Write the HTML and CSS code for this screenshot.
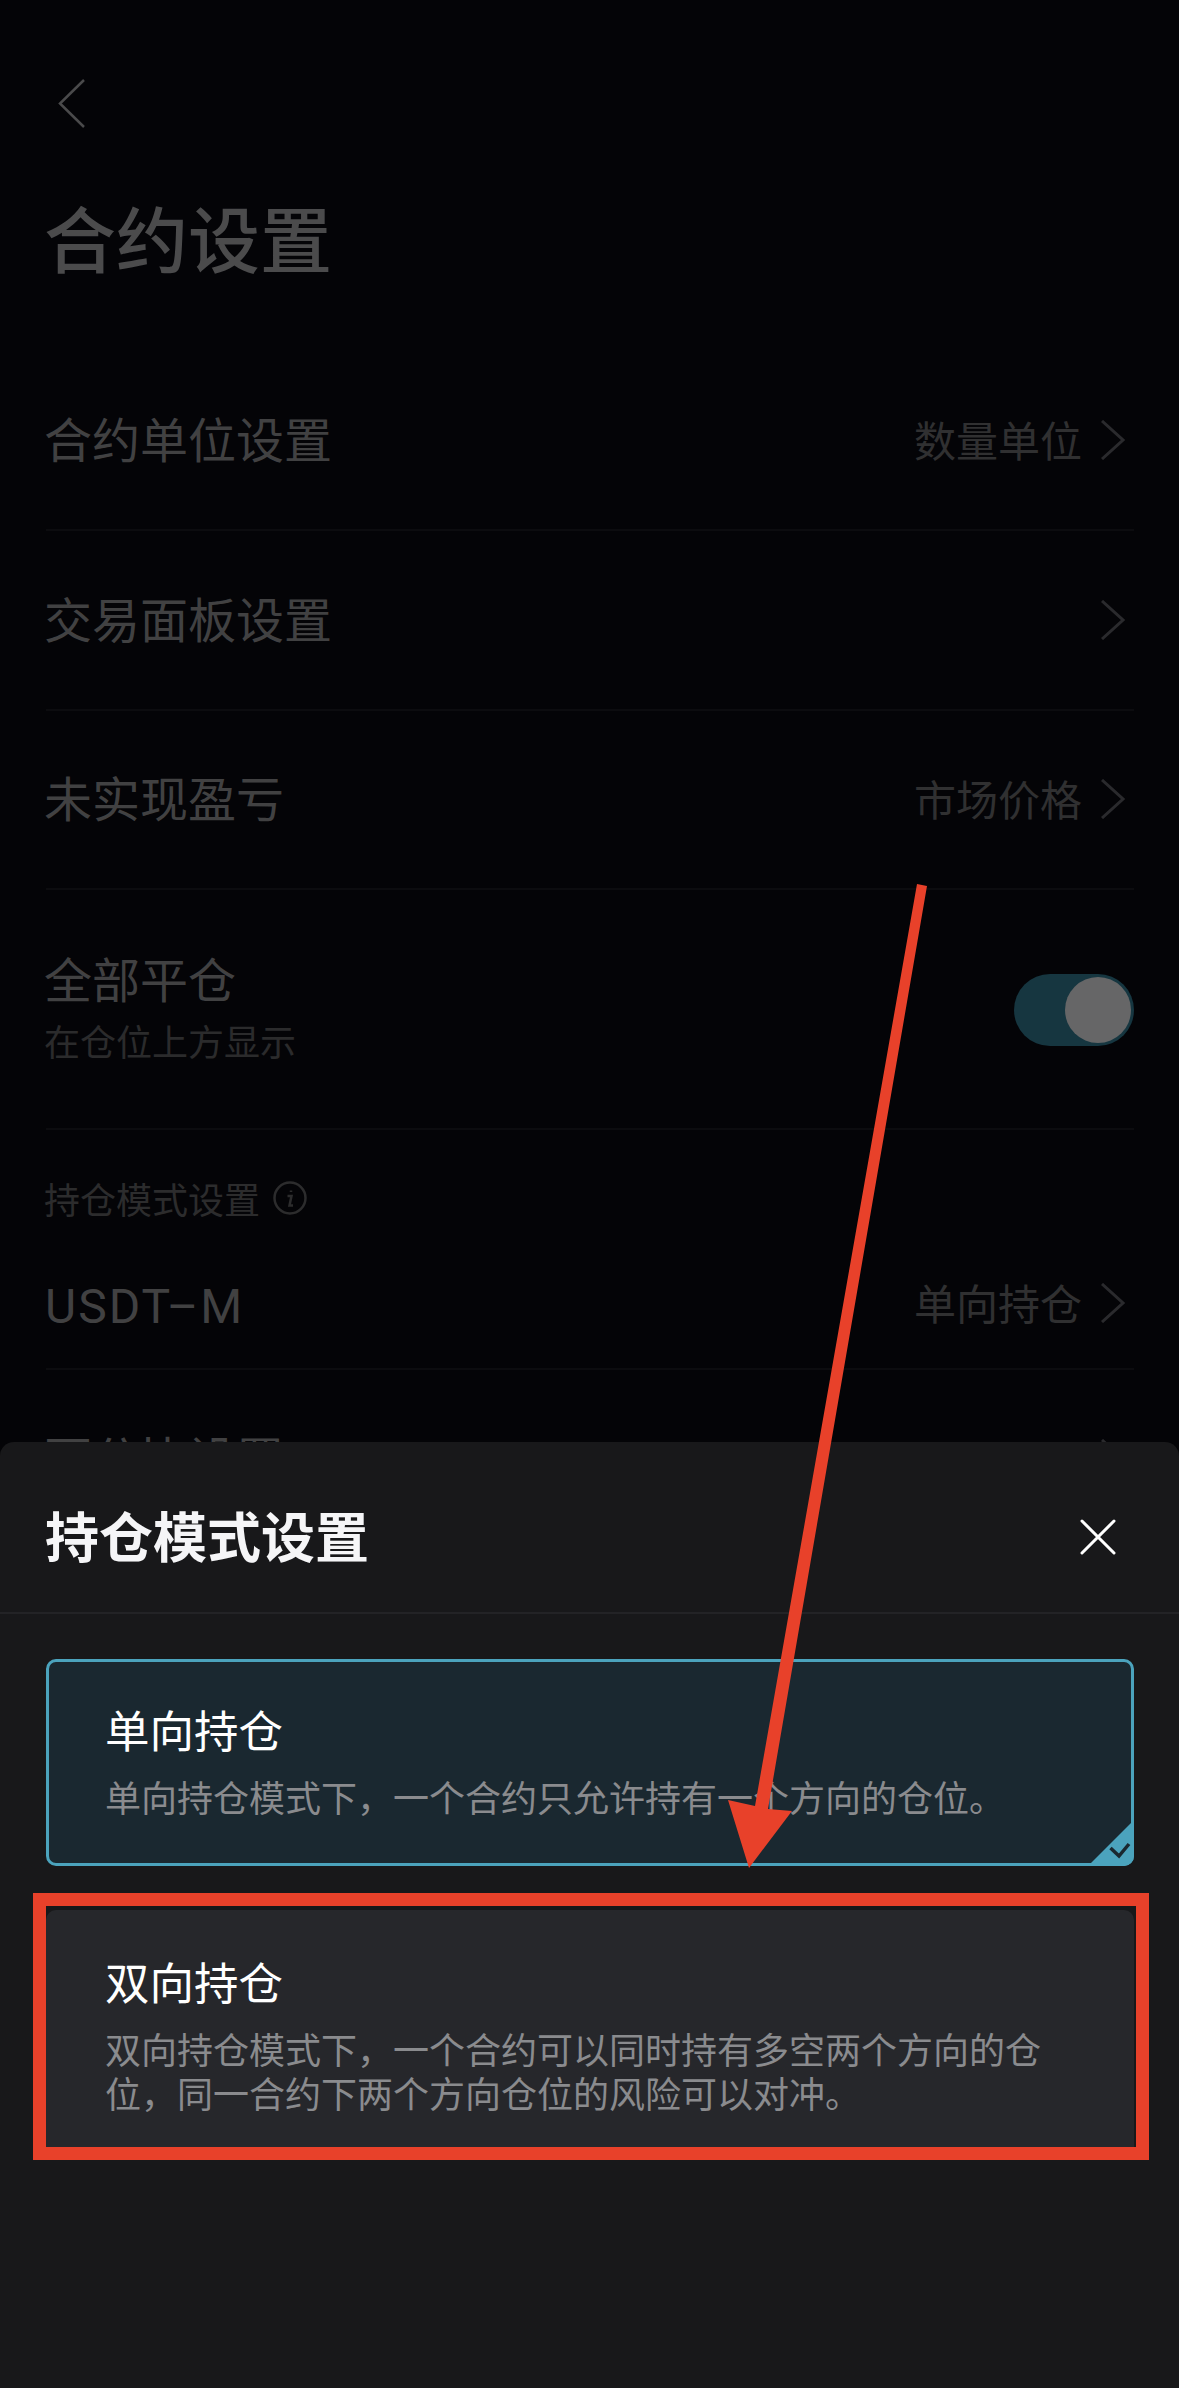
FILE: index.html
```html
<!DOCTYPE html>
<html lang="zh-CN">

<head>
    <meta charset="UTF-8">
    <meta name="viewport" content="width=device-width, initial-scale=1.0">
    <title>合约设置</title>
    <link rel="stylesheet" href="styles.css">
</head>

<body>
    <div class="page">
        <!-- Settings page, dimmed behind the sheet -->
        <div class="settings">
            <svg class="back" viewBox="0 0 27 49"><path d="M26 1 2 24.5 26 48"/></svg>
            <h1>合约设置</h1>

            <div class="row">
                <span class="row-label">合约单位设置</span>
                <div class="row-right">
                    <span class="row-value">数量单位</span>
                    <svg class="chevron" viewBox="0 0 25 40"><path d="M2 1 23 20 2 39"/></svg>
                </div>
            </div>
            <div class="row">
                <span class="row-label">交易面板设置</span>
                <div class="row-right">
                    <svg class="chevron" viewBox="0 0 25 40"><path d="M2 1 23 20 2 39"/></svg>
                </div>
            </div>
            <div class="row">
                <span class="row-label">未实现盈亏</span>
                <div class="row-right">
                    <span class="row-value">市场价格</span>
                    <svg class="chevron" viewBox="0 0 25 40"><path d="M2 1 23 20 2 39"/></svg>
                </div>
            </div>
            <div class="row row-tall">
                <div class="row-text">
                    <div class="row-label">全部平仓</div>
                    <div class="row-sub">在仓位上方显示</div>
                </div>
                <div class="toggle"><div class="knob"></div></div>
            </div>

            <div class="section-label">
                <span>持仓模式设置</span>
                <svg class="info" viewBox="0 0 34 34">
                    <circle cx="17" cy="17" r="15.5"/>
                    <path d="M18 9.5v1.5M14.5 15h4l-2 9.5h3.5"/>
                </svg>
            </div>
            <div class="row row-usdt">
                <span class="row-label row-latin">USDT–M</span>
                <div class="row-right">
                    <span class="row-value">单向持仓</span>
                    <svg class="chevron" viewBox="0 0 25 40"><path d="M2 1 23 20 2 39"/></svg>
                </div>
            </div>
            <div class="row">
                <span class="row-label">百分比设置</span>
                <div class="row-right">
                    <svg class="chevron" viewBox="0 0 25 40"><path d="M2 1 23 20 2 39"/></svg>
                </div>
            </div>
        </div>

        <!-- Bottom sheet -->
        <div class="sheet">
            <div class="sheet-header">
                <h2>持仓模式设置</h2>
                <svg class="close" viewBox="0 0 36 36"><path d="M2 2 34 34M34 2 2 34"/></svg>
            </div>
            <div class="options">
                <div class="option option-active">
                    <h3>单向持仓</h3>
                    <p>单向持仓模式下，一个合约只允许持有一个方向的仓位。</p>
                    <svg class="corner" viewBox="0 0 46 46">
                        <path class="corner-bg" d="M46 0V36a10 10 0 0 1-10 10H0Z"/>
                        <path class="corner-check" d="M22.5 28 31 36 41 24"/>
                    </svg>
                </div>
                <div class="option">
                    <h3>双向持仓</h3>
                    <p>双向持仓模式下，一个合约可以同时持有多空两个方向的仓位，同一合约下两个方向仓位的风险可以对冲。</p>
                </div>
            </div>
        </div>

        <!-- Red annotation on top of the screenshot -->
        <div class="mark-box"></div>
        <svg class="mark-arrow" viewBox="0 0 1179 2388">
            <path d="M917 884 927 886 768 1809 792 1811 749 1868 728 1800 755 1806Z"/>
        </svg>
    </div>
</body>

</html>
```

FILE: styles.css
```css
/* General styling */
* {
    box-sizing: border-box;
}

body {
    margin: 0;
    background-color: #040407;
    font-family: "Noto Sans CJK SC", "Noto Sans", sans-serif;
}

h1,
h2,
h3,
p {
    margin: 0;
    font-weight: normal;
}

.page {
    position: relative;
    height: 2388px;
    overflow: hidden;
}

/* Dimmed settings page */
.settings {
    padding: 79px 45px 0 46px;
}

.back {
    display: block;
    width: 27px;
    height: 49px;
    margin-left: 12px;
    fill: none;
    stroke: #4a4a4b;
    stroke-width: 2.5;
}

h1 {
    margin: 66px 0 0 -2px;
    font-size: 72px;
    line-height: 84px;
    font-weight: 500;
    color: #4b4b4c;
}

.row {
    display: flex;
    justify-content: space-between;
    align-items: center;
    height: 179.5px;
    border-bottom: 2px solid #0c0c0f;
}

.settings h1 + .row {
    margin-top: 73.5px;
}

.row-label {
    margin-left: -2px;
    padding-bottom: 6px;
    font-size: 48px;
    line-height: 60px;
    color: #414142;
}

.row-latin {
    margin-left: -1px;
    padding: 7px 0 0;
    font-family: Roboto, sans-serif;
    letter-spacing: 2px;
}

.row-right {
    display: flex;
    align-items: center;
    gap: 18px;
    padding-right: 9px;
}

.row-value {
    padding-bottom: 3px;
    font-size: 42px;
    line-height: 56px;
    color: #303031;
}

.chevron {
    width: 25px;
    height: 40px;
    fill: none;
    stroke: #2a2a2d;
    stroke-width: 3;
}

.row-tall {
    height: 240px;
}

.row-text {
    padding-bottom: 6px;
}

.row-tall .row-label {
    padding-bottom: 0;
}

.row-sub {
    margin: 8px 0 0 -2px;
    font-size: 36px;
    line-height: 50px;
    color: #2b2b2c;
}

.toggle {
    display: flex;
    justify-content: flex-end;
    align-items: center;
    width: 120px;
    height: 72px;
    margin-top: 2px;
    padding-right: 3px;
    border-radius: 36px;
    background-color: #163640;
}

.knob {
    width: 66px;
    height: 66px;
    border-radius: 50%;
    background-color: #666667;
}

.section-label {
    display: flex;
    align-items: center;
    gap: 13px;
    height: 50px;
    margin: 43px 0 0 -2px;
    font-size: 36px;
    color: #2c2c2d;
}

.info {
    width: 34px;
    height: 34px;
    fill: none;
    stroke: #2c2c2d;
    stroke-width: 2.5;
}

.row-usdt {
    height: 147px;
    padding-top: 15px;
}

/* Bottom sheet */
.sheet {
    position: absolute;
    left: 0;
    right: 0;
    bottom: 0;
    height: 946px;
    border-radius: 14px 14px 0 0;
    background-color: #18181a;
}

.sheet-header {
    display: flex;
    justify-content: space-between;
    align-items: center;
    height: 172px;
    padding: 20px 63px 0 45px;
    border-bottom: 2px solid #232326;
}

h2 {
    margin-bottom: 6px;
    font-size: 54px;
    font-weight: 700;
    color: #f5f5f7;
}

.close {
    width: 36px;
    height: 36px;
    fill: none;
    stroke: #fff;
    stroke-width: 3;
    stroke-linecap: round;
}

.options {
    display: flex;
    flex-direction: column;
    gap: 44px;
    padding: 45px 45px 0 46px;
}

.option {
    position: relative;
    padding: 39px 60px 0 59px;
    min-height: 250px;
    border-radius: 10px;
    background-color: #26272b;
}

.option-active {
    min-height: 207px;
    padding: 35px 58px 0 56px;
    border: 3px solid #4ba3bd;
    background-color: #1a2830;
}

h3 {
    font-size: 44.5px;
    line-height: 64px;
    color: #fff;
}

.option p {
    margin-top: 12.5px;
    font-size: 36px;
    line-height: 44.5px;
    color: #8a8b8e;
}

.corner {
    position: absolute;
    right: -3px;
    bottom: -3px;
    width: 46px;
    height: 46px;
}

.corner-bg {
    fill: #4ba3bd;
}

.corner-check {
    fill: none;
    stroke: #1a2830;
    stroke-width: 3.5;
}

/* Annotation */
.mark-box {
    position: absolute;
    left: 33px;
    top: 1893px;
    width: 1116px;
    height: 267px;
    border: 13px solid #e8412a;
}

.mark-arrow {
    position: absolute;
    left: 0;
    top: 0;
    width: 1179px;
    height: 2388px;
    fill: #e8412a;
}
```
